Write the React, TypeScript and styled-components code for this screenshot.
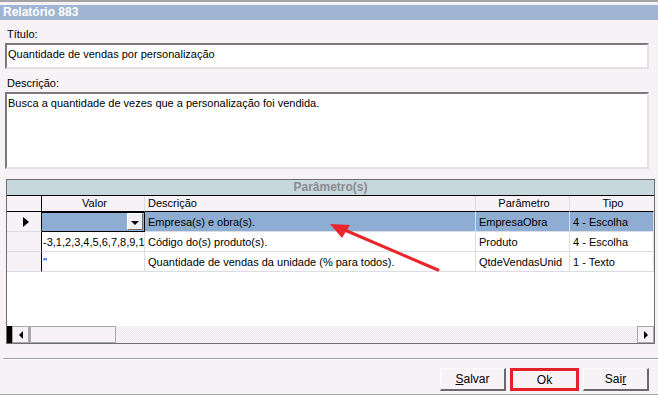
import React from 'react';
import styled, { createGlobalStyle } from 'styled-components';

const PAGE_BG = '#f6f2f6';

const GlobalStyle = createGlobalStyle`
    html, body {
        margin: 0;
        padding: 0;
        background: ${PAGE_BG};
    }
    * {
        box-sizing: border-box;
    }
`;

interface Parametro {
    valor: string;
    descricao: string;
    parametro: string;
    tipo: string;
    selected?: boolean;
}

// valor is shown as the grid clips it
const parametros: Parametro[] = [
    { valor: '', descricao: 'Empresa(s) e obra(s).', parametro: 'EmpresaObra', tipo: '4 - Escolha', selected: true },
    { valor: '-3,1,2,3,4,5,6,7,8,9,1', descricao: 'Código do(s) produto(s).', parametro: 'Produto', tipo: '4 - Escolha' },
    { valor: "''", descricao: 'Quantidade de vendas da unidade (% para todos).', parametro: 'QtdeVendasUnid', tipo: '1 - Texto' },
];

const App = () => {
    return (
        <>
            <GlobalStyle />
            <Frame>
                <TitleBar>Relatório 883</TitleBar>
                <Field>
                    <Label>Título:</Label>
                    <TextBox height={26}>Quantidade de vendas por personalização</TextBox>
                </Field>
                <Field>
                    <Label>Descrição:</Label>
                    <TextBox height={77}>Busca a quantidade de vezes que a personalização foi vendida.</TextBox>
                </Field>
                <Grid>
                    <GridCaption>Parâmetro(s)</GridCaption>
                    <Table>
                        <HeadCell indicator />
                        <HeadCell align='center'>Valor</HeadCell>
                        <HeadCell>Descrição</HeadCell>
                        <HeadCell align='center'>Parâmetro</HeadCell>
                        <HeadCell align='center' last>Tipo</HeadCell>
                        {parametros.map((p, i) => (
                            <React.Fragment key={i}>
                                <Cell indicator>{p.selected && <RowMarker />}</Cell>
                                {p.selected ? (
                                    <EditCell>
                                        <ComboButton><ComboArrow /></ComboButton>
                                    </EditCell>
                                ) : (
                                    <Cell tight>{p.valor}</Cell>
                                )}
                                <Cell selected={p.selected}>{p.descricao}</Cell>
                                <Cell selected={p.selected}>{p.parametro}</Cell>
                                <Cell selected={p.selected} last>{p.tipo}</Cell>
                            </React.Fragment>
                        ))}
                    </Table>
                    <GridBody />
                    <ScrollBar>
                        <ScrollEdge />
                        <ScrollButton><ArrowLeft /></ScrollButton>
                        <ScrollThumb />
                        <ScrollTrack />
                        <ScrollButton><ArrowRight /></ScrollButton>
                    </ScrollBar>
                    <Pointer viewBox='0 0 120 56' width='120' height='56'>
                        <line x1='110' y1='48' x2='12' y2='6' stroke='#e8262b' strokeWidth='3' strokeLinecap='round' />
                        <polygon points='2,2 22,3 14,16' fill='#e8262b' />
                    </Pointer>
                </Grid>
                <Separator />
                <ButtonRow>
                    <Button><u>S</u>alvar</Button>
                    <Button highlighted>Ok</Button>
                    <Button>Sai<u>r</u></Button>
                </ButtonRow>
            </Frame>
        </>
    );
}

type TextBoxProps = { height: number };
type HeadCellProps = { indicator?: boolean; align?: string; last?: boolean };
type CellProps = { indicator?: boolean; selected?: boolean; last?: boolean; tight?: boolean };
type ButtonProps = { highlighted?: boolean };

const Frame = styled.div`
    width: 658px;
    height: 395px;
    display: flex;
    flex-direction: column;
    border-top: 2px solid #a3a3a3;
    border-bottom: 1px solid #a3a3a3;
    padding-top: 3px;
    background: ${PAGE_BG};
    font-family: "Liberation Sans", Arial, sans-serif;
    font-size: 11px;
    color: #000;
`;

const TitleBar = styled.div`
    height: 15px;
    background: #a0b5d3;
    color: #fff;
    font-weight: bold;
    font-size: 12px;
    line-height: 15px;
    padding-left: 3px;
`;

const Field = styled.div`
    display: flex;
    flex-direction: column;
    padding: 0 9px 0 5px;
`;

const Label = styled.div`
    height: 23px;
    line-height: 14px;
    padding: 7px 0 0 2px;
`;

const TextBox = styled.div<TextBoxProps>`
    height: ${props => props.height}px;
    background: #fff;
    border-top: 2px solid #7a7a7a;
    border-left: 2px solid #7a7a7a;
    border-right: 2px solid #e4e0e4;
    border-bottom: 2px solid #e4e0e4;
    padding: 2px 0 0 1px;
    line-height: 14px;
`;

const Grid = styled.div`
    position: relative;
    margin: 10px 3px 0 6px;
    height: 165px;
    display: flex;
    flex-direction: column;
    border: 1px solid #6e6e6e;
    background: #fff;
    font-size: 11px;
`;

const GridCaption = styled.div`
    height: 16px;
    background: #c7d7de;
    color: #8a8c90;
    font-weight: bold;
    font-size: 12px;
    text-align: center;
    line-height: 15px;
    border-bottom: 1px solid #000;
`;

const Table = styled.div`
    display: grid;
    grid-template-columns: 35px 103px 331px 94px 1fr;
    grid-auto-rows: 20px;
    grid-template-rows: 16px;
`;

const HeadCell = styled.div<HeadCellProps>`
    background: ${PAGE_BG};
    border-bottom: 1px solid #000;
    border-right: 1px solid ${props => props.indicator ? '#000' : props.last ? PAGE_BG : '#dcdce4'};
    text-align: ${props => props.align || 'left'};
    line-height: 15px;
    padding-left: 3px;
    white-space: nowrap;
    overflow: hidden;
`;

const Cell = styled.div<CellProps>`
    position: relative;
    display: flex;
    align-items: center;
    min-width: 0;
    background: ${props => props.selected ? '#8eadd2' : props.indicator ? PAGE_BG : '#fff'};
    border-bottom: 1px solid #dcdce4;
    border-right: 1px solid ${props => props.indicator ? '#000' : '#dcdce4'};
    justify-content: ${props => props.indicator ? 'center' : 'flex-start'};
    padding-left: ${props => props.indicator ? '0' : props.tight ? '1px' : '3px'};
    white-space: nowrap;
    overflow: hidden;
`;

const EditCell = styled.div`
    display: flex;
    justify-content: flex-end;
    align-items: stretch;
    background: #8eadd2;
    border: 1px solid #000;
    border-left: none;
    padding: 0 1px 1px 0;
`;

const ComboButton = styled.div`
    width: 16px;
    display: flex;
    align-items: center;
    justify-content: center;
    background: #f0eef0;
    border-top: 1px solid #fff;
    border-left: 1px solid #fff;
    border-right: 1px solid #6e6e6e;
    border-bottom: 1px solid #6e6e6e;
`;

const ComboArrow = styled.div`
    width: 0;
    height: 0;
    border-left: 4px solid transparent;
    border-right: 4px solid transparent;
    border-top: 4px solid #000;
    margin-top: 2px;
`;

const RowMarker = styled.div`
    width: 0;
    height: 0;
    border-top: 5px solid transparent;
    border-bottom: 5px solid transparent;
    border-left: 6px solid #000;
    margin-left: 4px;
`;

const GridBody = styled.div`
    flex: 1;
    background: #fff;
`;

const ScrollBar = styled.div`
    height: 17px;
    display: flex;
    background: #fff;
`;

const ScrollEdge = styled.div`
    width: 5px;
    background: #000;
`;

const ScrollButton = styled.div`
    width: 17px;
    display: flex;
    align-items: center;
    justify-content: center;
    background: ${PAGE_BG};
    border: 1px solid #a8a8a8;
`;

const ArrowLeft = styled.div`
    width: 0;
    height: 0;
    border-top: 4px solid transparent;
    border-bottom: 4px solid transparent;
    border-right: 4px solid #000;
`;

const ArrowRight = styled.div`
    width: 0;
    height: 0;
    border-top: 4px solid transparent;
    border-bottom: 4px solid transparent;
    border-left: 4px solid #000;
`;

const ScrollThumb = styled.div`
    width: 87px;
    background: ${PAGE_BG};
    border: 1px solid #a8a8a8;
    border-left-width: 2px;
`;

const ScrollTrack = styled.div`
    flex: 1;
    background-color: #f4f2f4;
    background-image: repeating-conic-gradient(#ece8ec 0% 25%, #f8f6f8 0% 50%);
    background-size: 2px 2px;
`;

const Pointer = styled.svg`
    position: absolute;
    left: 321px;
    top: 42px;
    overflow: visible;
`;

const Separator = styled.div`
    margin: 14px 0 0 3px;
    height: 2px;
    border-top: 1px solid #a0a0a0;
    border-bottom: 1px solid #fff;
`;

const ButtonRow = styled.div`
    display: flex;
    justify-content: flex-end;
    gap: 5px;
    padding: 8px 9px 0 0;
`;

const Button = styled.div<ButtonProps>`
    width: ${props => props.highlighted ? '69px' : '66px'};
    height: 23px;
    display: flex;
    align-items: center;
    justify-content: center;
    background: ${PAGE_BG};
    font-size: 12px;
    border-top: 1px solid #fff;
    border-left: 1px solid #fff;
    border-right: 2px solid #6a6a6a;
    border-bottom: 2px solid #6a6a6a;
    ${props => props.highlighted && `
        border: 3px solid #e4202a;
        margin: 0 -1px;
    `}
`;

export default App;
